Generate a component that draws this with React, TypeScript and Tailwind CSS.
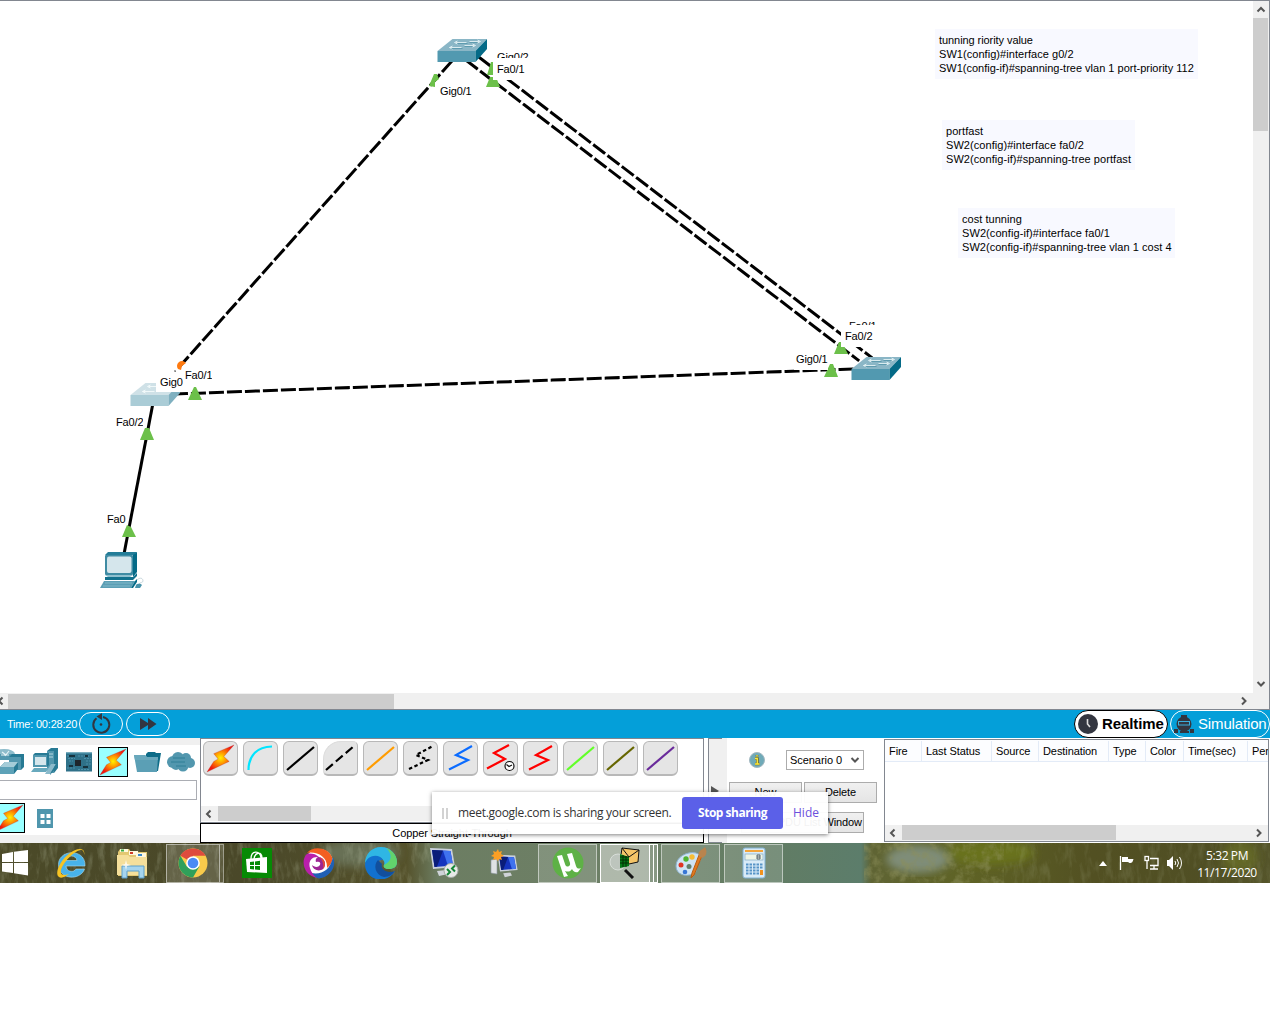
import React from "react";

type Cls = { className?: string };

function Chevron({ dir, className = "" }: { dir: "l" | "r" | "u" | "d" } & Cls) {
  const d = {
    l: "M6.5 1.5 L3 5 L6.5 8.5",
    r: "M3 1.5 L6.5 5 L3 8.5",
    u: "M1.5 6.5 L5 3 L8.5 6.5",
    d: "M1.5 3 L5 6.5 L8.5 3",
  }[dir];
  return (
    <svg width="10" height="10" viewBox="0 0 10 10" className={className}>
      <path d={d} fill="none" stroke="#555" strokeWidth="2" />
    </svg>
  );
}

function SwitchShape({ x, y, pale = false }: { x: number; y: number; pale?: boolean }) {
  return (
    <g transform={`translate(${x} ${y})`}>
      <polygon points="0,12 15,0 49.5,0 38,12" fill={pale ? "#cfe1e7" : "#8ab6c6"} />
      <polygon points="0,12 38,12 38,23 0,23" fill={pale ? "#aaccd6" : "#5299b0"} />
      <polygon points="38,12 49.5,0 49.5,10 38,23" fill={pale ? "#7fb0c0" : "#046a87"} />
      <g stroke={pale ? "#f4fafb" : "#e2f0f4"} strokeWidth=".9" fill="none">
        <path d="M18 3.5H29M17 3.5l3-1.500M17 3.500l3 1.500" />
        <path d="M32 2.5H42M43 2.5l-3-1.500M43 2.500l-3 1.500" />
        <path d="M12 8.5H24M12 8.500l3-1.500M12 8.500l3 1.500" />
        <path d="M27 6.500H37M38 6.500l-3-1.500M38 6.500l-3 1.500" />
      </g>
      {!pale && <path d="M20 4.500H30M32 3.500H40M14 9.500H25M27 7.500H35" stroke="#4c8fa5" strokeWidth=".7" />}
    </g>
  );
}

function Topology() {
  const dash = { stroke: "#000", strokeWidth: 3, strokeDasharray: "12 6", strokeLinecap: "square" as const };
  return (
    <svg width="1253" height="691" viewBox="0 1 1253 691" className="block">
      <line x1="451" y1="62" x2="181" y2="365" {...dash} />
      <line x1="467" y1="61" x2="858" y2="360" {...dash} />
      <line x1="480" y1="58" x2="871" y2="357" {...dash} />
      <line x1="852" y1="369" x2="176" y2="394" {...dash} />
      <line x1="153" y1="403" x2="124" y2="554" stroke="#000" strokeWidth="3" />
      <SwitchShape x={437.5} y={39} />
      <SwitchShape x={851.5} y={357} />
      <SwitchShape x={130.5} y={383} pale />
      <g fill="#6cc04a">
        <polygon points="429,86 434,74 437,74 439,79 435,82 435,87" />
        <polygon points="487,75 491,62 493,62 493,75" />
        <polygon points="486,87 490,77 496,77 500,87" />
        <polygon points="834,354 839,342 842,342 848,354" />
        <polygon points="824,377 830,364 833,364 838,377" />
        <polygon points="188,400 194,387 196,387 202,400" />
        <polygon points="140,440 145,428 149,428 154,440" />
        <polygon points="122,537 127,525 131,527 136,537" />
      </g>
      <path d="M178 369 A4.2 4.2 0 1 1 186 363 L182 366 L181 370Z" fill="#ff7a0f" />
      <path d="M174 371h2M175 372h1" stroke="#555" />
      <g>
        <polygon points="105,555 108,552 137,552 134,555" fill="#247d98" />
        <polygon points="133,555 137,552 137,572 133,577" fill="#046a87" />
        <rect x="105" y="555" width="28" height="20" rx="1" fill="#3f8ba3" />
        <rect x="107" y="556.5" width="24.500" height="16.500" rx="2" fill="#d5e6ec" />
        <polygon points="105,575 133,575 130,577 108,577" fill="#8ebfce" />
        <polygon points="105,577 133,577 137,573 137,576 133,580 105,580" fill="#12718d" />
        <polygon points="104,581 135,581 131,588 100,588" fill="#5b9fb5" />
        <path d="M105 583H132M103 586H130" stroke="#8ebfce" strokeWidth=".8" />
        <polygon points="135,581 137,579 137,582 133,588 131,588" fill="#046a87" />
        <path d="M137 580c3-3 6-2 6 1c0 2-3 1-4 3" fill="none" stroke="#b5c9d0" strokeWidth=".7" />
        <path d="M136 585c2-2 5-1 6 0l-2 3h-5z" fill="#4792aa" />
      </g>
    </svg>
  );
}

function Port({ className = "", children }: Cls & { children: React.ReactNode }) {
  return (
    <span className={`absolute overflow-hidden whitespace-nowrap bg-white text-[11px] leading-[14px] tracking-[-0.15px] ${className}`}>
      {children}
    </span>
  );
}

function Note({ className = "", lines }: Cls & { lines: React.ReactNode[] }) {
  return (
    <div className={`absolute whitespace-nowrap bg-[#f8f9ff] pt-1 pl-1 text-[11px] leading-[14px] ${className}`}>
      {lines.map((l, i) => (
        <div key={i}>{l}</div>
      ))}
    </div>
  );
}

function Bolt({ className = "", id }: Cls & { id: string }) {
  return (
    <svg viewBox="0 0 30 30" className={className}>
      <defs>
        <radialGradient id={id} cx="50%" cy="48%" r="50%">
          <stop offset="0" stopColor="#fff200" />
          <stop offset=".4" stopColor="#ff9a00" />
          <stop offset="1" stopColor="#f01810" />
        </radialGradient>
      </defs>
      <polygon points="29,1 8,10 12.5,15.500 8,18 1,29 24,18 18.500,13" fill={`url(#${id})`} stroke="#a33" strokeWidth=".3" />
    </svg>
  );
}

function Canvas() {
  return (
    <section className="flex h-[710px] flex-col border-t border-r border-b border-[#828790]">
      <div className="flex h-[692px]">
        <div className="relative w-[1253px] shrink-0 bg-white">
          <Topology />
          <Port className="left-[493px] top-[49px] h-[8px] pl-1">Gig0/2</Port>
          <Port className="left-[493px] top-[57px] h-[22px] w-[33px] pt-1 pl-1">Fa0/1</Port>
          <Port className="left-[438px] top-[83px] pl-0.5">Gig0/1</Port>
          <Port className="left-[847px] top-[318px] h-[6px] pl-0.5">Fa0/1</Port>
          <Port className="left-[841px] top-[324px] h-[22px] w-[33px] pt-1 pl-1">Fa0/2</Port>
          <Port className="left-[794px] top-[351px] pb-1 pl-0.5">Gig0/1</Port>
          <Port className="left-[156px] top-[371px] h-[20px] w-[27px] pt-[3px] pl-1">Gig0</Port>
          <Port className="left-[183px] top-[367px] pl-0.5">Fa0/1</Port>
          <Port className="left-[114px] top-[414px] pl-0.5">Fa0/2</Port>
          <Port className="left-[105px] top-[511px] pl-0.5">Fa0</Port>
          <Note
            className="left-[935px] top-[28px] h-[50px] w-[263px]"
            lines={[
              <span className="tracking-[-0.07px]">tunning riority value</span>,
              <span className="tracking-[0.05px]">SW1(config)#interface g0/2</span>,
              "SW1(config-if)#spanning-tree vlan 1 port-priority 112",
            ]}
          />
          <Note
            className="left-[942px] top-[119px] h-[50px] w-[193px] tracking-[0.06px]"
            lines={["portfast", "SW2(config)#interface fa0/2", "SW2(config-if)#spanning-tree portfast"]}
          />
          <Note
            className="left-[958px] top-[207px] h-[50px] w-[217px] tracking-[0.04px]"
            lines={["cost tunning", <span className="tracking-[0.08px]">SW2(config-if)#interface fa0/1</span>, "SW2(config-if)#spanning-tree vlan 1 cost 4"]}
          />
        </div>
        <div className="flex w-[16px] flex-col items-center bg-[#f0f0f0] pr-px">
          <Chevron dir="u" className="mt-1 mb-[3px] shrink-0" />
          <div className="h-[113px] w-[15px] bg-[#cdcdcd]" />
          <Chevron dir="d" className="mt-auto mb-1 shrink-0" />
        </div>
      </div>
      <div className="flex h-4 items-center bg-[#f0f0f0]">
        <Chevron dir="l" className="-ml-1 mr-[2px]" />
        <div className="h-[15px] w-[386px] bg-[#cdcdcd]" />
        <Chevron dir="r" className="ml-auto mr-5" />
      </div>
    </section>
  );
}

function TimeBar() {
  return (
    <section className="flex h-[28px] items-center bg-[#049fd9] text-white">
      <span className="w-[79px] shrink-0 pl-[7px] text-[11px] tracking-[-0.2px] whitespace-nowrap">Time: 00:28:20</span>
      <span className="mr-[3px] flex h-6 w-11 shrink-0 items-center justify-center rounded-full border border-white">
        <svg width="20" height="20" viewBox="0 0 20 20" className="overflow-visible">
          <path d="M5.500 4.300A8 8 0 1 0 12 2.900" fill="none" stroke="#333640" strokeWidth="2" />
          <path d="M5.500 2.500L11 -1V6Z" fill="#333640" />
          <circle cx="10" cy="10.500" r="1.300" fill="#333640" />
        </svg>
      </span>
      <span className="flex h-6 w-11 shrink-0 items-center justify-center rounded-full border border-white">
        <svg width="18" height="12" viewBox="0 0 18 12">
          <path d="M1 0L9 5V0L17.500 6L9 12V7L1 12Z" fill="#333640" />
        </svg>
      </span>
      <span className="ml-auto flex h-[28px] w-[94px] items-center rounded-full border-[1.5px] border-black bg-white pl-[3px] text-[15px] font-bold text-black">
        <svg width="20" height="20" viewBox="0 0 20 20" className="mr-[4px] shrink-0">
          <circle cx="10" cy="10" r="10" fill="#333640" />
          <path d="M9.500 5V10L12 13" fill="none" stroke="#ddd" strokeWidth="1.600" />
        </svg>
        <span className="tracking-[-0.1px]">Realtime</span>
      </span>
      <span className="ml-[2px] flex h-[28px] w-[100px] items-center rounded-full border border-white pl-[3px] text-[15px]">
        <svg width="20" height="20" viewBox="0 0 20 20" className="mr-[4px] shrink-0">
          <path d="M0 15h4v4H0zM16 15h4v4h-4zM6 17h9v2H6zM7 1h6v3H7z" fill="#333640" />
          <circle cx="10" cy="10" r="7.500" fill="#333640" />
          <rect x="4.500" y="7.500" width="11" height="3.500" fill="#333640" stroke="#3aaedd" />
        </svg>
        <span className="tracking-[-0.15px]">Simulation</span>
      </span>
    </section>
  );
}

function RouterIcon() {
  return (
    <svg width="24" height="28" viewBox="0 0 24 28">
      <ellipse cx="4" cy="6" rx="11" ry="5" fill="#8dbccb" />
      <path d="M-3 6v6h18V6z" fill="#5398af" />
      <path d="M2 4l4 3M9 3L5 8M1 7h8" stroke="#e7f3f6" strokeWidth="1.200" />
      <path d="M9 9l3-3h12v13l-3 3H9z" fill="#277a94" />
      <path d="M9 9h12v13H9z" fill="#5398af" />
      <path d="M0 19l5-5h13v7l-4 5H0z" fill="#277a94" />
      <path d="M0 19h14v7H0z" fill="#5da2b8" />
      <path d="M0 19l5-5h13l-4 5z" fill="#a4ccd8" />
    </svg>
  );
}

function PcIcon() {
  return (
    <svg width="28" height="28" viewBox="0 0 28 28">
      <path d="M16 3l4-3h7v20l-4 5h-7z" fill="#277a94" />
      <path d="M16 3h7v22h-7z" fill="#5297ae" />
      <path d="M17 6h5M17 9h5" stroke="#b6d7e1" />
      <path d="M2 7l2-2h14v12l-2 2H2z" fill="#277a94" />
      <path d="M2 7h14v12H2z" fill="#5297ae" />
      <path d="M4 9h11v8H4z" fill="#d5e6ec" />
      <path d="M3 20h15l-3 4H0z" fill="#68a9bd" />
      <path d="M20 16h5l-6 10h-5z" fill="#8abacb" />
      <path d="M25 16v4l-6 7v-1z" fill="#277a94" />
    </svg>
  );
}

function BoardIcon() {
  return (
    <svg width="26" height="20" viewBox="0 0 26 20">
      <rect width="26" height="19" y=".5" fill="#2f7189" />
      <path d="M0 1h26" stroke="#5ba0b7" />
      <path d="M1 4h9M12 4h12M2 6.500h7M18 6.500h7M1 16h8M12 17.500h12M20 9h5M20 12h5M3 9h4" stroke="#4d90a8" strokeDasharray="2 1" />
      <rect x="9" y="8" width="6" height="6" fill="#1e252b" />
      <path d="M3 13h4v2H3zM19 3h3v2h-3zM3 3h6v2H3zM17 14h5v2h-5z" fill="#16323e" />
    </svg>
  );
}

function DevicePanel() {
  return (
    <div className="flex w-[200px] flex-col bg-[#f0f0f0] pt-[7px] pb-2">
      <div className="flex h-[90px] flex-col overflow-hidden bg-white">
        <div className="flex h-[35px] shrink-0 items-center pb-px">
          <RouterIcon />
          <span className="w-[7px]" />
          <PcIcon />
          <span className="w-[7px]" />
          <BoardIcon />
          <span className="ml-[6px] flex size-[30px] items-center justify-center border border-black bg-[#99ffff]">
            <Bolt id="boltA" className="size-[28px]" />
          </span>
          <svg width="28" height="20" viewBox="0 0 28 20" className="ml-[6px]">
            <path d="M12 2l2-2h7l1 1h5l-3 18H12z" fill="#0d6c88" />
            <path d="M0 3h11l2 2h11l-1 15H3z" fill="#5b9fb5" />
            <path d="M0 3h11l2 2h11v3H1z" fill="#69a8bc" />
          </svg>
          <svg width="28" height="20" viewBox="0 0 28 20" className="ml-[5px]">
            <g fill="#5297ae">
              <circle cx="6" cy="10" r="6" />
              <circle cx="11" cy="6" r="6" />
              <circle cx="19" cy="6" r="5" />
              <circle cx="23" cy="11" r="5" />
              <circle cx="16" cy="14" r="5.500" />
              <circle cx="9" cy="13" r="5" />
            </g>
            <path d="M6 6h12M4 10h14M9 14h10" stroke="#2f7e96" />
          </svg>
        </div>
        <div className="mr-[3px] h-[20px] shrink-0 border border-l-0 border-[#abadb3] bg-white" />
        <div className="flex h-[35px] shrink-0 items-center pt-px">
          <span className="-ml-[5px] flex size-[30px] items-center justify-center border border-black bg-[#99ffff]">
            <Bolt id="boltB" className="size-[28px]" />
          </span>
          <svg width="16" height="19" viewBox="0 0 16 19" className="ml-[12px]">
            <rect width="16" height="19" fill="#4f96ad" />
            <path d="M3.500 5h4v4h-4zM9.500 5h4v4h-4zM3.500 11h4v4h-4zM9.500 11h4v4h-4z" fill="#fff" />
          </svg>
        </div>
      </div>
    </div>
  );
}

const cables: React.ReactNode[] = [
  null,
  <path d="M5.500 29C5.500 16 13 5.500 29 5.500" stroke="#00e5ff" />,
  <path d="M4 29L31 6" stroke="#000" />,
  <path d="M3 29L31 5" stroke="#000" strokeDasharray="9 4" />,
  <path d="M4 29L31 6" stroke="#ff9c00" />,
  <path d="M6 28L25 19L13 14L30 5" stroke="#000" strokeDasharray="3.500 2.500" />,
  <path d="M6 28.500L25 19L13 14L29 5" stroke="#0b6cff" />,
  <path d="M4 27.500L22 18L11 12L26 4" stroke="#f00" />,
  <path d="M6 28.500L25 19L13 14L29 5" stroke="#f00" />,
  <path d="M4 29L31 6" stroke="#62ff28" />,
  <path d="M4 29L31 6" stroke="#666600" />,
  <path d="M4 29L31 6" stroke="#6a2b9b" />,
];

function CablePanel() {
  return (
    <div className="flex w-[504px] flex-col">
      <div className="flex h-[85px] flex-col justify-between border border-[#828790] bg-white pb-px">
        <div className="flex gap-[5px] pt-[2px] pl-[2px]">
          {cables.map((c, i) => (
            <span
              key={i}
              className={`relative flex size-[35px] items-center justify-center overflow-hidden border-[#b8b8b8] bg-[#e5e5e5] ${
                i === 3 ? "rounded-[5px] rounded-tl-[18px] border border-l-[#dcdcdc] border-t-[#dcdcdc] border-b-2" : "rounded-[6px] border-[1.5px] border-b-2"
              }`}
            >
              {c ? (
                <svg width="35" height="35" viewBox="0 0 35 35" className="-m-0.5 shrink-0" fill="none" strokeWidth="2.200">
                  {c}
                  {i === 7 && (
                    <g strokeWidth="1.200">
                      <circle cx="26.500" cy="25" r="4.500" fill="#fff" stroke="#111" />
                      <path d="M23.500 23.500L26 25.500L29 24" stroke="#111" />
                    </g>
                  )}
                </svg>
              ) : (
                <Bolt id="boltC" className="size-[29px] shrink-0" />
              )}
            </span>
          ))}
        </div>
        <div className="flex h-[15px] items-center bg-[#f0f0f0]">
          <Chevron dir="l" className="mx-[3px] mr-[4px]" />
          <div className="h-[15px] w-[93px] bg-[#cdcdcd]" />
        </div>
      </div>
      <div className="flex h-5 items-center justify-center border border-black bg-white text-[11px] tracking-[-0.1px]">
        Copper Straight-Through
      </div>
    </div>
  );
}

function GrayButton({ className = "", children }: Cls & { children: React.ReactNode }) {
  return (
    <span className={`flex h-[21px] items-center justify-center border border-[#acacac] bg-gradient-to-b from-[#f0f0f0] to-[#e5e5e5] text-[11px] whitespace-nowrap ${className}`}>
      {children}
    </span>
  );
}

function ScenarioPanel() {
  return (
    <div className="flex w-[180px] bg-white">
      <div className="ml-1 flex w-[14px] items-center border border-r-0 border-[#828790] bg-[#f0f0f0]">
        <svg width="10" height="12" viewBox="0 0 10 12">
          <path d="M2 1L10 6L2 11Z" fill="#555" />
        </svg>
      </div>
      <div className="w-[5px] bg-[#f0f0f0]" />
      <div className="pt-[12px] pl-[2px]">
        <div className="flex items-center pl-5">
          <svg width="16" height="16" viewBox="0 0 16 16">
            <circle cx="8" cy="8" r="7.500" fill="#6faab8" stroke="#a4b8c0" />
            <path d="M6 6.500h2.500v5.500M8 3v1.500M6 12h4.500" stroke="#766d20" strokeWidth="2.600" fill="none" />
            <path d="M6 6.500h2.300v5.500M8 3v1.500M6 12h4.500" stroke="#ffeb3b" strokeWidth="1.300" fill="none" />
          </svg>
          <span className="ml-[21px] flex h-5 w-[78px] items-center justify-between border border-[#acacac] pr-[3px] pl-[3px] text-[11px] tracking-[-0.05px] whitespace-nowrap">
            Scenario 0 <Chevron dir="d" />
          </span>
        </div>
        <div className="mt-3 flex gap-[2px]">
          <GrayButton className="w-[73px]">New</GrayButton>
          <GrayButton className="w-[73px] tracking-[-0.1px]">Delete</GrayButton>
        </div>
        <GrayButton className="mt-[9px] ml-[12px] w-[123px] tracking-[-0.1px]">Toggle PDU List Window</GrayButton>
      </div>
    </div>
  );
}

function EventPanel() {
  const th = "border-r border-[#e3ebf7] pl-1 shrink-0 h-full flex items-center";
  return (
    <div className="mt-px flex h-[103px] w-[385px] flex-col justify-between overflow-hidden border border-[#828790] bg-white">
      <div className="flex h-[22px] items-center border-b border-[#e3ebf7] bg-[#fcfdff] pt-px text-[11px] tracking-[-0.08px] whitespace-nowrap">
        <span className={`${th} w-[37px]`}>Fire</span>
        <span className={`${th} w-[70px]`}>Last Status</span>
        <span className={`${th} w-[47px]`}>Source</span>
        <span className={`${th} w-[70px]`}>Destination</span>
        <span className={`${th} w-[37px]`}>Type</span>
        <span className={`${th} w-[38px]`}>Color</span>
        <span className={`${th} w-[64px]`}>Time(sec)</span>
        <span className="pl-1">Per</span>
      </div>
      <div className="flex h-4 items-center bg-[#f0f0f0] pb-px">
        <Chevron dir="l" className="mx-[3px] mr-[4px]" />
        <div className="h-[15px] w-[214px] bg-[#cdcdcd]" />
        <Chevron dir="r" className="ml-auto mr-1" />
      </div>
    </div>
  );
}

function Wallpaper() {
  return (
    <svg className="absolute inset-0" width="1270" height="40" viewBox="0 0 1270 40" preserveAspectRatio="none">
      <defs>
        <linearGradient id="wpBase">
          <stop offset="0" stopColor="#4b4a28" />
          <stop offset=".2" stopColor="#4a4829" />
          <stop offset=".32" stopColor="#55522b" />
          <stop offset=".345" stopColor="#6c7d62" />
          <stop offset=".5" stopColor="#6d8067" />
          <stop offset=".6" stopColor="#627c63" />
          <stop offset=".678" stopColor="#5c7d6b" />
          <stop offset=".686" stopColor="#5f6434" />
          <stop offset=".76" stopColor="#5f6325" />
          <stop offset=".86" stopColor="#525022" />
          <stop offset=".95" stopColor="#504f24" />
          <stop offset="1" stopColor="#55552a" />
        </linearGradient>
        <filter id="wpNoise" x="0" y="0" width="100%" height="100%">
          <feTurbulence type="fractalNoise" baseFrequency=".16 .05" numOctaves="4" seed="7" />
          <feColorMatrix values="0 0 0 0 .6  0 0 0 0 .66  0 0 0 0 .48  3 0 0 0 -1.400" />
        </filter>
        <filter id="wpLeaves" x="0" y="0" width="100%" height="100%">
          <feTurbulence type="fractalNoise" baseFrequency=".11" numOctaves="4" seed="3" />
          <feColorMatrix values="0 0 0 0 .26  0 0 0 0 .27  0 0 0 0 .1  3 0 0 0 -1.300" />
        </filter>
        <filter id="wpSoft">
          <feGaussianBlur stdDeviation="4" />
        </filter>
      </defs>
      <rect width="1270" height="40" fill="url(#wpBase)" />
      <g filter="url(#wpSoft)">
        <ellipse cx="918" cy="16" rx="32" ry="14" fill="#7f8d78" />
        <ellipse cx="360" cy="10" rx="40" ry="14" fill="#687055" />
        <ellipse cx="990" cy="10" rx="45" ry="12" fill="#69721f" />
        <ellipse cx="1240" cy="14" rx="18" ry="16" fill="#636728" />
      </g>
      <rect width="430" height="40" filter="url(#wpNoise)" opacity=".22" />
      <rect x="864" width="140" height="40" filter="url(#wpLeaves)" opacity=".55" />
      <rect x="1000" width="270" height="40" filter="url(#wpNoise)" opacity=".12" />
    </svg>
  );
}

function TaskIcon({ children, w = 32 }: { children: React.ReactNode; w?: number }) {
  return (
    <svg width={w} height="32" viewBox={`0 0 ${w} 32`} className="shrink-0">
      {children}
    </svg>
  );
}

function Monitor() {
  return (
    <>
      <path d="M9 24l9-1 2 4-9 2z" fill="#cfd3d8" />
      <path d="M2 1L24 2L27 20L5 22Z" fill="#c9d0dc" />
      <path d="M4 3L22.500 4L25 18.500L6.500 20Z" fill="#1534bd" />
      <path d="M4 3L15 3.600L9 19.800L6.500 20Z" fill="#0a1d79" />
      <path d="M15 3.600L22.500 4L25 18.500L20 19Z" fill="#3f72ef" />
    </>
  );
}

function Taskbar() {
  const cell = "flex h-[39px] shrink-0 items-center justify-center";
  const open = "border border-white/50 bg-white/15";
  return (
    <section className="relative h-10 overflow-hidden">
      <Wallpaper />
      <div className="relative flex h-10 items-center">
        <span className="w-[55px]">
          <svg width="29" height="28" viewBox="0 0 29 28">
            <path d="M2 5L13 3V13H2ZM14 2.800L28 1V13H14ZM2 14H13V24L2 22.500ZM14 14H28V26.500L14 24.300Z" fill="#fff" />
          </svg>
        </span>
        <span className="w-[61px]">
          <TaskIcon>
            <path d="M30 19H11c0 6 8 7 10 3h8.500c-4 12-26 11-26-4.500C3.500 2 31 1 30 19ZM11 13.500h11c-1-6-10-6-11 0Z" fill="#48b3ea" fillRule="evenodd" stroke="#a5dcf5" strokeWidth=".6" />
            <path d="M29 8C31 1 23 0 15 6C5 13-1 27 4 30C7 32 11 29 14 27C8 29 5 28 6 23C9 13 22 2 27 3C29 4 29 6 29 8Z" fill="#f6c324" />
          </TaskIcon>
        </span>
        <span className="w-[50px]">
          <TaskIcon w={33}>
            <path d="M2 5l2-3h9l2 3h16v24H2z" fill="#e3c872" />
            <path d="M4 2h8v3H4zM13 4h9v4h-9zM20 6h10v4H20z" fill="#fff8df" />
            <path d="M5 2.500h3v2H5z" fill="#39ad47" />
            <path d="M14 5h3v2h-3z" fill="#d33c28" />
            <path d="M22 7h4v2h-4z" fill="#3887cc" />
            <path d="M1 8h11l2 2h17v18H1z" fill="#f5df9b" />
            <path d="M6 19h22v12h-5v-7H11v7H6z" fill="#a5d4ee" stroke="#5d9fca" />
            <path d="M10 13l1 4 4 1-4 1-1 4-1-4-4-1 4-1z" fill="#fff" opacity=".8" />
          </TaskIcon>
        </span>
        <span className={`${cell} ${open} w-[54px]`}>
          <TaskIcon>
            <circle cx="16" cy="16" r="14.500" fill="#f9cb4b" />
            <path d="M16 16L3.400 8.800A14.500 14.500 0 0 1 28.600 8.800H16Z" fill="#de4b3e" />
            <path d="M3.400 8.800A14.500 14.500 0 0 0 16 30.500L22.300 19.600L16 16L9.800 19.500Z" fill="#30a05a" />
            <circle cx="16" cy="16" r="6.800" fill="#fff" />
            <circle cx="16" cy="16" r="5.300" fill="#4a8af4" />
          </TaskIcon>
        </span>
        <span className="h-[39px] w-[4px] shrink-0 border border-l-0 border-white/40 bg-white/10" />
        <span className={`${cell} w-[66px]`}>
          <TaskIcon w={30}>
            <rect y="1" width="30" height="30" fill="#068a05" />
            <path d="M4 12l21-2v16L5 25z" fill="#fff" />
            <path d="M9 12c0-9 9-9 10-1M12 12c1-7 8-8 8-1" fill="none" stroke="#fff" strokeWidth="1.300" />
            <path d="M8 15l4-.5v3.500H8zM13 14.400l5-.6V18h-5zM8 19h4v3.500L8 22zM13 19h5v4l-5-.4z" fill="#068a05" />
          </TaskIcon>
        </span>
        <span className={`${cell} w-[58px]`}>
          <TaskIcon>
            <circle cx="16" cy="16" r="14" fill="#fff" />
            <path d="M4 6C9-1 24-1 29 10C30 14 28 18 24 21C25 10 14 4 4 6Z" fill="#f35f22" />
            <path d="M30 10C34 20 27 30 16 31.500C13 31 10 29 8 26C18 28 27 24 30 10Z" fill="#2060b5" />
            <path d="M14 31C4 29-1 20 1 12C2 9 3 7 5 6.500C9 6 13 7 16 10C8 9 5 15 7 21C8 25 11 29 14 31Z" fill="#b91fab" />
            <path d="M16 10C22 11 24 18 20 22C16 25 10 23 9 18C11 20 15 21 17 18C18 15 16 14 13 15C12 12 14 10 16 10Z" fill="#9d2594" />
            <path d="M16 10C22 11 24 18 20 22C21 18 20 13 16 10Z" fill="#e04a3e" />
          </TaskIcon>
        </span>
        <span className={`${cell} w-[66px]`}>
          <TaskIcon>
            <path d="M0 16C0 8 6 0 16 0C26 0 32 8 32 15C32 20 28 22 24 22C20 22 18 20 19 18C22 12 9 4 0 16Z" fill="#2fb6e4" />
            <path d="M21 1C29 4 32 10 32 15C32 20 28 22 24 22C20 22 18 20 19 18C28 14 27 6 21 1Z" fill="#62d36c" />
            <path d="M0 17C2 8 14 6 18 13C12 12 9 20 13 25C17 29 24 29 30 24C22 38 0 34 0 17Z" fill="#1271cf" />
            <path d="M13 13C8 18 10 28 19 30C24 30 28 27 30 24C22 27 15 22 17 17Z" fill="#124f9d" />
          </TaskIcon>
        </span>
        <span className={`${cell} w-[60px]`}>
          <TaskIcon>
            <Monitor />
            <circle cx="23" cy="23.500" r="7" fill="#e8eae8" stroke="#a5aaa5" />
            <path d="M19 22l3 3-3 3M27 18.500l-3 3 3 3" fill="none" stroke="#148636" strokeWidth="2" />
          </TaskIcon>
        </span>
        <span className={`${cell} w-[62px]`}>
          <TaskIcon>
            <path d="M2 13l6-1v15l-6-1z" fill="#dfe2e5" stroke="#8c959f" strokeWidth=".6" />
            <g transform="translate(7 7) scale(.8)">
              <Monitor />
            </g>
            <path d="M9 2l1 3 3-1-1 3 3 2-3 1 1 3-3-1-1 2-2-2-3 1 1-3-3-1 3-2-1-3 3 1z" fill="#fb9f25" />
          </TaskIcon>
        </span>
        <span className={`${cell} ${open} ml-[2px] w-[59px]`}>
          <TaskIcon>
            <circle cx="16" cy="16" r="15.500" fill="#5eb146" />
            <path d="M5 9l5-1 3 9c1 4 6 3 5-1l-3-9 5-1 4 13c1 3 3 3 5 2l-3 4c-3 1-5-1-6-3c-2 3-4 3-7 2l3 5l-4 1z" fill="#fff" />
          </TaskIcon>
        </span>
        <span className={`${cell} ml-[3px] w-[50px] border-[1.5px] border-white bg-white/45`}>
          <TaskIcon>
            <path d="M12 8L13 1L30 3L29 15L20 17L12 15Z" fill="#f4c568" stroke="#111" />
            <path d="M13 1l7 9 10-7" fill="none" stroke="#111" />
            <circle cx="9" cy="15" r="8" fill="#bdc5bd" stroke="#d8ded8" />
            <path d="M11 7l9 3v9l-9 2z" fill="#067a17" />
            <path d="M11 10h9M11 13h9M11 16h9M14 8v12M17 9v11" stroke="#022e05" />
            <path d="M16 23l8 8" stroke="#111" strokeWidth="3" />
          </TaskIcon>
        </span>
        <span className="h-[39px] w-[4px] shrink-0 border-y border-r border-white bg-white/20" />
        <span className="h-[39px] w-[4px] shrink-0 border-y border-r border-white bg-white/20" />
        <span className={`${cell} ${open} ml-[3px] w-[59px]`}>
          <TaskIcon>
            <path d="M1 19C1 10 12 4 21 6C28 8 26 14 23 16C19 19 24 24 18 27C11 30 1 28 1 19Z" fill="#cfe4f4" stroke="#8ab0cc" />
            <circle cx="14" cy="19.500" r="2.500" fill="#62806a" />
            <circle cx="6" cy="18" r="2.500" fill="#df3424" />
            <circle cx="11" cy="12" r="2.700" fill="#50b432" />
            <circle cx="17" cy="10" r="2.700" fill="#f6bd35" />
            <circle cx="10" cy="25" r="2.300" fill="#3776d5" />
            <path d="M27 9L19 28L16 31L17 26L24 8Z" fill="#e17a20" stroke="#b85d12" />
            <path d="M24 9C22 4 27 3 30 0C33 5 31 10 27 11Z" fill="#b8844e" />
          </TaskIcon>
        </span>
        <span className={`${cell} ${open} ml-[4px] w-[59px]`}>
          <TaskIcon w={24}>
            <rect x="1" y="1" width="22" height="30" rx="2" fill="#d9ebf7" stroke="#7eb0d3" />
            <path d="M3 4h18" stroke="#f3a53a" strokeWidth="2" />
            <rect x="3" y="7" width="18" height="6" fill="#eef5e7" stroke="#7fa8c4" strokeWidth=".7" />
            <path d="M15 8h3v4h-3zM15 10h3" fill="none" stroke="#345" strokeWidth=".8" />
            <path d="M4 17.500h17M4 20.500h17M4 23.500h13M4 26.500h13" stroke="#5794c7" strokeWidth="2.200" strokeDasharray="2.500 1" />
            <path d="M18 23h3v5h-3z" fill="#f2921e" />
          </TaskIcon>
        </span>
        <div className="ml-auto flex h-10 items-center text-[12px] leading-[17px] text-white">
          <svg width="8" height="5" viewBox="0 0 8 5" className="mr-[12px]">
            <path d="M0 5L4 0L8 5Z" fill="#fff" />
          </svg>
          <svg width="16" height="16" viewBox="0 0 16 16" className="mr-[9px]">
            <path d="M1.500 1v14" stroke="#fff" strokeWidth="1.300" />
            <path d="M3 2h6v2h5.500c-1 3-1 4-4 4L9 7H3z" fill="#fff" />
          </svg>
          <svg width="15" height="16" viewBox="0 0 15 16" className="mr-[8px]" fill="none" stroke="#fff" strokeWidth="1.300">
            <path d="M6 3.500h8v7H6M10 11v3M6 14h8M3 6v8" />
            <rect x="1" y="1.500" width="3.500" height="4" />
          </svg>
          <svg width="16" height="14" viewBox="0 0 16 14" className="mr-[14px]">
            <path d="M0 4h2l4-4v14l-4-4H0z" fill="#fff" />
            <path d="M8 5q1.500 2 0 4M10 3q3 4 0 8M12.500 1q4 6 0 12" fill="none" stroke="#fff" />
          </svg>
          <span className="w-[60px] pt-[2px] text-center font-['Open_Sans',sans-serif] tracking-[-0.4px] whitespace-nowrap">
            5:32 PM
            <br />
            11/17/2020
          </span>
          <span className="w-[13px]" />
        </div>
      </div>
    </section>
  );
}

function SharingPopup() {
  return (
    <div className="absolute top-[792px] left-[432px] flex h-[42px] w-[396px] items-center bg-white/95 px-[10px] font-['Open_Sans','Noto_Sans',sans-serif] text-[12px] shadow-[0_1px_4px_rgba(0,0,0,0.5)]">
      <span className="mr-[10px] h-[11px] w-[6px] shrink-0 border-x-2 border-[#d2d2d2]" />
      <span className="w-[224px] shrink-0 tracking-[-0.3px] whitespace-nowrap text-[#333]">meet.google.com is sharing your screen.</span>
      <span className="flex h-8 w-[101px] shrink-0 items-center justify-center rounded-[3px] bg-[#5b60e8] font-bold tracking-[-0.5px] whitespace-nowrap text-white">
        Stop sharing
      </span>
      <span className="ml-[10px] text-[#6c50dc]">Hide</span>
    </div>
  );
}

export default function App() {
  return (
    <main className="relative h-[1024px] w-[1280px] overflow-hidden bg-white font-['Liberation_Sans',Arial,sans-serif] text-black">
      <div className="w-[1270px]">
        <Canvas />
        <TimeBar />
        <section className="flex h-[105px]">
          <DevicePanel />
          <CablePanel />
          <ScenarioPanel />
          <EventPanel />
        </section>
        <Taskbar />
      </div>
      <SharingPopup />
    </main>
  );
}
